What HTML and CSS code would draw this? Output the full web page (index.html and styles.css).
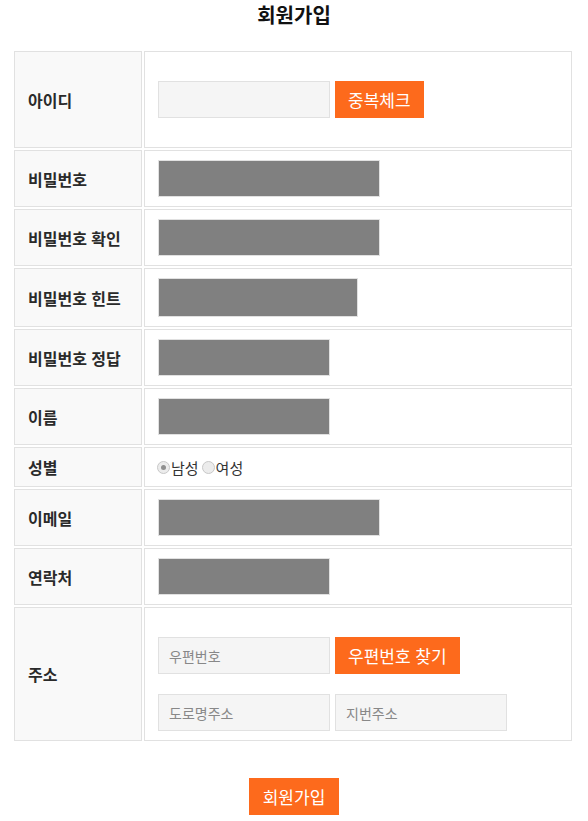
FILE: index.html
```html
<!DOCTYPE html>
<html lang="ko">
<head>
<meta charset="utf-8">
<title>회원가입</title>
<link rel="stylesheet" href="styles.css">
</head>
<body>
<h1 class="title">회원가입</h1>
<form class="join">
  <table class="form-table">
    <tr>
      <th>아이디</th>
      <td class="cell-id">
        <div class="line">
          <input class="field light w172" type="text">
          <button type="button" class="btn">중복체크</button>
        </div>
      </td>
    </tr>
    <tr>
      <th>비밀번호</th>
      <td><input class="field dark w222" type="text"></td>
    </tr>
    <tr>
      <th>비밀번호 확인</th>
      <td><input class="field dark w222" type="text"></td>
    </tr>
    <tr>
      <th>비밀번호 힌트</th>
      <td><input class="field dark w200 tall" type="text"></td>
    </tr>
    <tr>
      <th>비밀번호 정답</th>
      <td><input class="field dark w172" type="text"></td>
    </tr>
    <tr>
      <th>이름</th>
      <td><input class="field dark w172" type="text"></td>
    </tr>
    <tr>
      <th>성별</th>
      <td class="cell-radio">
        <div class="radios">
          <label class="radio"><input type="radio" name="gender" checked disabled><span>남성</span></label>
          <label class="radio"><input type="radio" name="gender" disabled><span>여성</span></label>
        </div>
      </td>
    </tr>
    <tr>
      <th>이메일</th>
      <td><input class="field dark w222" type="text"></td>
    </tr>
    <tr>
      <th>연락처</th>
      <td><input class="field dark w172" type="text"></td>
    </tr>
    <tr>
      <th>주소</th>
      <td>
        <div class="addr">
          <div class="line">
            <input class="field light w172" type="text" placeholder="우편번호">
            <button type="button" class="btn">우편번호 찾기</button>
          </div>
          <div class="line">
            <input class="field light w172" type="text" placeholder="도로명주소">
            <input class="field light w172" type="text" placeholder="지번주소">
          </div>
        </div>
      </td>
    </tr>
  </table>
  <div class="submit">
    <button type="button" class="btn">회원가입</button>
  </div>
</form>
</body>
</html>
```

FILE: styles.css
```css
* {
  box-sizing: border-box;
}

body {
  margin: 0;
  background: #fff;
  font-family: "Noto Sans CJK KR", "Noto Sans", sans-serif;
  color: #222;
}

.title {
  margin: 0 0 20px;
  padding-top: 1px;
  font-size: 20px;
  line-height: 28px;
  font-weight: 700;
  text-align: center;
  color: #111;
}

.join {
  margin: 0;
}

.form-table {
  margin-left: 12px;
  width: 562px;
  border-collapse: separate;
  border-spacing: 2px;
  table-layout: fixed;
}

.form-table th {
  width: 128px;
  padding: 0 13px;
  background: #f9f9f9;
  border: 1px solid #e1e1e1;
  text-align: left;
  vertical-align: middle;
  font-size: 16px;
  font-weight: 700;
  color: #2a2a2a;
  white-space: nowrap;
}

.form-table td {
  padding: 9px 13px;
  background: #fff;
  border: 1px solid #e1e1e1;
  vertical-align: middle;
}

.form-table td.cell-id {
  padding: 29px 13px;
}

.form-table td.cell-radio {
  padding: 9px 13px;
}

.line {
  display: flex;
  align-items: center;
  gap: 5px;
}

.field {
  display: block;
  height: 37px;
  margin: 0;
  padding: 0 10px;
  border: 1px solid #e1e1e1;
  font-family: inherit;
  font-size: 14px;
  color: #333;
  outline: none;
}

.field.light {
  background: #f5f5f5;
}

.field.dark {
  background: #808080;
}

.field.tall {
  height: 39px;
}

.field::placeholder {
  color: #888;
}

.w172 { width: 172px; }
.w200 { width: 200px; }
.w222 { width: 222px; }

.btn {
  height: 37px;
  margin: 0;
  padding: 0 13px;
  border: 0;
  background: #fd6a1c;
  color: #fff;
  font-family: inherit;
  font-size: 17px;
  line-height: 37px;
  white-space: nowrap;
  cursor: pointer;
}

.radios {
  display: flex;
  align-items: center;
  gap: 4px;
  height: 20px;
}

.radio {
  display: flex;
  align-items: center;
  font-size: 15px;
  color: #333;
}

.radio input {
  appearance: none;
  -webkit-appearance: none;
  width: 13px;
  height: 13px;
  margin: 0 1px 0 -1px;
  border: 1px solid #c8c8c8;
  border-radius: 50%;
  background: #ececec;
  display: grid;
  place-items: center;
}

.radio input:checked::after {
  content: "";
  width: 5px;
  height: 5px;
  border-radius: 50%;
  background: #8f8f8f;
}

.addr {
  display: flex;
  flex-direction: column;
  gap: 20px;
  padding-top: 20px;
}

.submit {
  display: flex;
  justify-content: center;
  margin-top: 35px;
}

.submit .btn {
  width: 90px;
  padding: 0;
}
```
